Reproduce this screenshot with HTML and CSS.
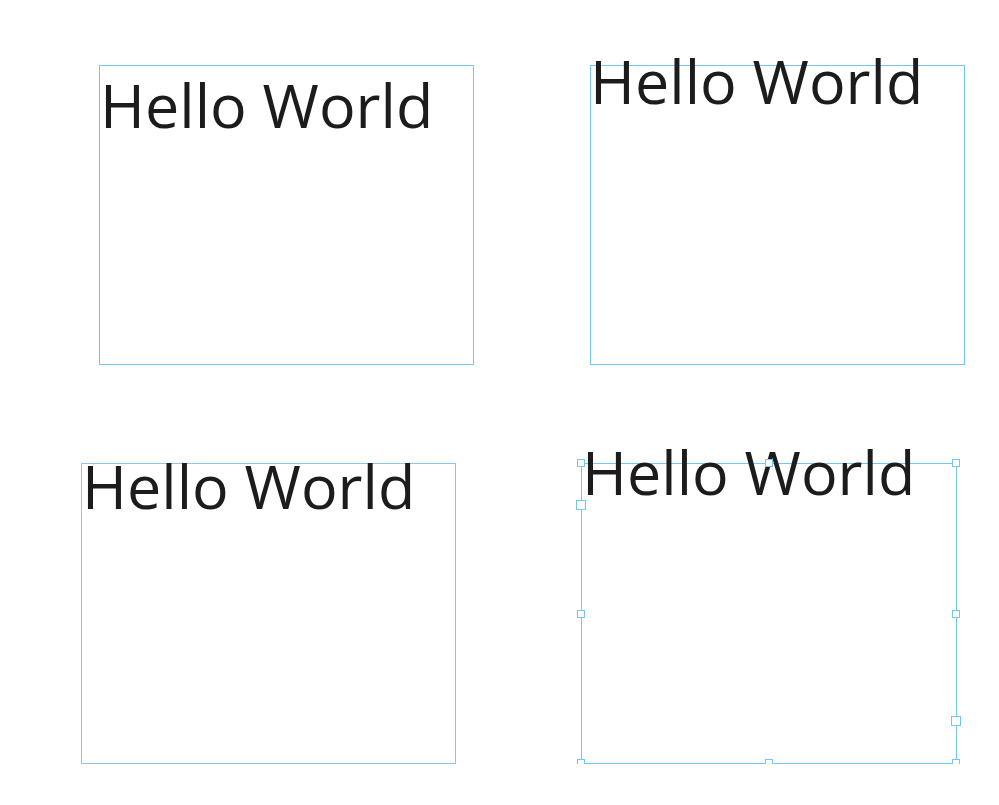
FILE: index.html
```html
<!DOCTYPE html>
<html lang="en">
<head>
  <meta charset="UTF-8">
  <meta name="viewport" content="width=device-width, initial-scale=1.0">
  <title>Text Frames</title>
  <link rel="stylesheet" href="styles.css">
</head>
<body>
  <div class="canvas">
    <div class="frame frame-a">
      <p class="label label-a">Hello World</p>
    </div>

    <div class="frame frame-b">
      <p class="label label-b">Hello World</p>
    </div>

    <div class="frame frame-c">
      <p class="label label-c">Hello World</p>
    </div>

    <div class="frame frame-d selected">
      <p class="label label-d">Hello World</p>
      <span class="handle h-tl"></span>
      <span class="handle h-tm"></span>
      <span class="handle h-tr"></span>
      <span class="handle h-ml"></span>
      <span class="handle h-mr"></span>
      <span class="handle h-bl"></span>
      <span class="handle h-bm"></span>
      <span class="handle h-br"></span>
      <span class="handle big h-in"></span>
      <span class="handle big h-out"></span>
    </div>
  </div>
</body>
</html>
```

FILE: styles.css
```css
body {
  margin: 0;
  background-color: #fff;
  font-family: 'Open Sans', 'Noto Sans', sans-serif;
  color: #1c1c1c;
}
.canvas {
  display: grid;
  grid-template-columns: 490px 1fr;
  grid-template-rows: 300px 301px;
  row-gap: 98px;
  padding-top: 65px;
}
.frame {
  position: relative;
  box-sizing: border-box;
  width: 375px;
  height: 300px;
  border: 1px solid #72c6fb;
}
.frame-a { margin-left: 99px; }
.frame-b { margin-left: 100px; }
.frame-c { margin-left: 81px; height: 301px; border-color: #8fc6ea; }
.frame-d { margin-left: 91px; width: 376px; height: 301px; }

.label {
  margin: 0;
  font-size: 61px;
  line-height: 61px;
  white-space: nowrap;
}
.label-a { margin-top: 8px; }
.label-b { margin-top: -16px; margin-left: -1px; }
.label-c { margin-top: -9px; }
.label-d { margin-top: -23px; }

.handle {
  position: absolute;
  width: 8px;
  height: 8px;
  box-sizing: border-box;
  border: 1px solid #72c6fb;
  background-color: #fff;
  margin: -4px 0 0 -4px;
}
.handle.big {
  width: 10px;
  height: 10px;
  margin: -5px 0 0 -5px;
}
.h-tl { left: -1px; top: -1px; }
.h-tm { left: 50%; top: -1px; }
.h-tr { left: 100%; top: -1px; }
.h-ml { left: -1px; top: 50%; }
.h-mr { left: 100%; top: 50%; }
.h-bl { left: -1px; top: 100%; }
.h-bm { left: 50%; top: 100%; }
.h-br { left: 100%; top: 100%; }
.h-in { left: -1px; top: 41px; }
.h-out { left: 100%; top: 257px; }
```
